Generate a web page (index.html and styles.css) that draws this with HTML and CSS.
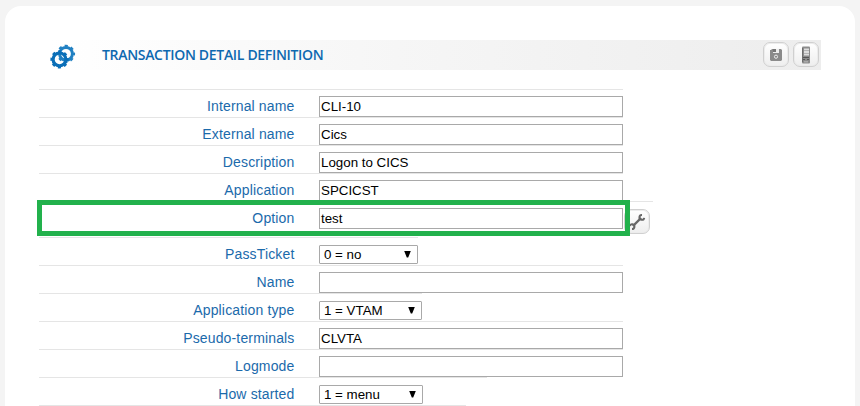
FILE: index.html
```
<!DOCTYPE html>
<html lang="en">
<head>
<meta charset="utf-8">
<title>Transaction detail definition</title>
<link rel="stylesheet" href="styles.css">
</head>
<body>
<main class="panel">
  <header class="header">
    <svg class="gears" width="27" height="26" viewBox="0 0 27 26" fill="none" stroke="#0b6fb8">
      <g stroke="#2180c2"><circle cx="17" cy="9.8" r="6.4" stroke-width="3"/><circle cx="17" cy="9.8" r="8" stroke-width="2.2" stroke-dasharray="3.14 3.14" stroke-dashoffset="1.57"/></g>
      <circle cx="10.5" cy="15.4" r="6.4" stroke-width="3.2"/><circle cx="10.5" cy="15.4" r="8" stroke-width="2.2" stroke-dasharray="3.14 3.14" stroke-dashoffset="1.57"/>
    </svg>
    <h1 class="title">TRANSACTION DETAIL DEFINITION</h1>
    <div class="actions">
      <button class="tool" aria-label="Save"><svg width="14" height="14" viewBox="0 0 14 14"><path fill="#8b8b8b" d="M1 2h1l1-1h9l1 1v10l-1 1H2l-1-1z"/><path fill="#eee" d="M4 1h6v4H4z"/><path fill="#777" d="M4 1h3v3H4z"/><circle cx="7" cy="8.7" r="1.6" fill="#888" stroke="#eee" stroke-width="1"/></svg></button>
      <button class="tool" aria-label="Terminal"><svg width="10" height="18" viewBox="0 0 10 18"><rect x="1" y="0.5" width="8" height="17" rx="1" fill="#8b8b8b"/><path fill="#6d6d6d" d="M1 2h1v14H1z"/><path stroke="#ddd" stroke-width="1.9" d="M3 3.5h5M3 6h5M3 8.5h5"/><path stroke="#555" d="M2 11.5h6M2 13.5h2M6 13.5h2"/><path fill="#aaa" d="M3 15h4v1.5H3z"/></svg></button>
    </div>
  </header>
  <form class="form">
    <div class="row"><label>Internal name</label><div class="field">CLI-10</div></div>
    <div class="row"><label>External name</label><div class="field">Cics</div></div>
    <div class="row"><label>Description</label><div class="field">Logon to CICS</div></div>
    <div class="row"><label>Application</label><div class="field">SPCICST</div></div>
    <div class="row row-option"><label>Option</label><div class="field">test</div>
      <button type="button" class="tool wrench" aria-label="Configure"><svg width="18" height="18" viewBox="0 0 18 18"><path fill="none" stroke="#666" stroke-width="2.4" d="M5 13l8-8"/><path fill="none" stroke="#666" stroke-width="2" d="M14 2a2.4 2.4 0 1 0 2.2 2.8M1.7 13a2.4 2.4 0 1 1 2.3 3"/></svg></button>
      <div class="highlight"></div>
    </div>
    <div class="row line-ticket"><label>PassTicket</label><div class="select select-ticket">0 = no<i></i></div></div>
    <div class="row"><label>Name</label><div class="field"></div></div>
    <div class="row line-type"><label>Application type</label><div class="select select-type">1 = VTAM<i></i></div></div>
    <div class="row"><label>Pseudo-terminals</label><div class="field">CLVTA</div></div>
    <div class="row"><label>Logmode</label><div class="field"></div></div>
    <div class="row line-start"><label>How started</label><div class="select select-start">1 = menu<i></i></div></div>
    <div class="row line-last"></div>
  </form>
</main>
</body>
</html>
```
FILE: styles.css
```
* { box-sizing: border-box; }
body { margin: 0; height: 406px; background: #f4f4f4; padding: 6px 5px 0; font-family: "Liberation Sans", Arial, sans-serif; }
.panel { height: 400px; background: #fff; border-radius: 16px 16px 0 0; padding: 34px 34px 0; }
.header { display: flex; align-items: center; height: 30px; margin-left: 11px; background: linear-gradient(90deg, #fff 0%, #f6f6f6 45%, #ededed 100%); }
.gears { margin-top: 4px; margin-left: -1px; flex: none; }
.title { margin: 0 0 0 26px; font: 600 14px/30px "Open Sans", sans-serif; letter-spacing: -0.32px; color: #0e69b0; white-space: nowrap; }
.actions { display: flex; gap: 4px; margin: -1px 2px 0 auto; }
.tool { display: flex; align-items: center; justify-content: center; width: 26px; height: 25px; padding: 0; border: 1px solid #d0d0d0; border-radius: 7px; background: linear-gradient(#fff, #eee); box-shadow: inset 0 0 0 1px #ececec; }
.form { margin: 19px 0 0; }
.row { position: relative; display: flex; align-items: flex-start; height: 28px; }
.row::before { content: ""; position: absolute; z-index: -1; top: 0; left: 0; width: 584px; height: 1px; background: #e5e5e5; }
.form, .row { isolation: isolate; }
.row label { width: 255.5px; padding-top: 8px; text-align: right; font-size: 14px; line-height: 18px; letter-spacing: 0.15px; color: #1b6aab; }
.field, .select { font-size: 13.33px; color: #000; background: #fff; }
.field { width: 304px; height: 21px; margin: 7px 0 0 24.5px; padding-left: 1px; border: 1px solid #a9a9a9; line-height: 19px; }
.select { display: flex; align-items: center; justify-content: space-between; height: 19px; margin: 8px 0 0 24.5px; padding: 0 6px 0 4px; border: 1px solid #a9a9a9; border-radius: 1px; line-height: 17px; }
.select i { width: 7px; height: 7px; margin-top: -1px; background: #000; clip-path: polygon(0 0, 100% 0, 60% 100%, 40% 100%); }
.select-ticket { width: 99px; }
.select-type { width: 103px; }
.select-start { width: 104px; }
.row-option { height: 36px; }
.row-option::before { width: 614px; }
.line-ticket::before { width: 379px; }
.line-type::before { width: 383px; }
.line-start::before { width: 448px; }
.line-last { height: 1px; }
.line-last::before { width: 427px; }
.wrench { margin: 8px 0 0 1px; }
.highlight { position: absolute; top: -1px; left: -2px; width: 593px; height: 36px; border: 5px solid #22b14c; }
```
